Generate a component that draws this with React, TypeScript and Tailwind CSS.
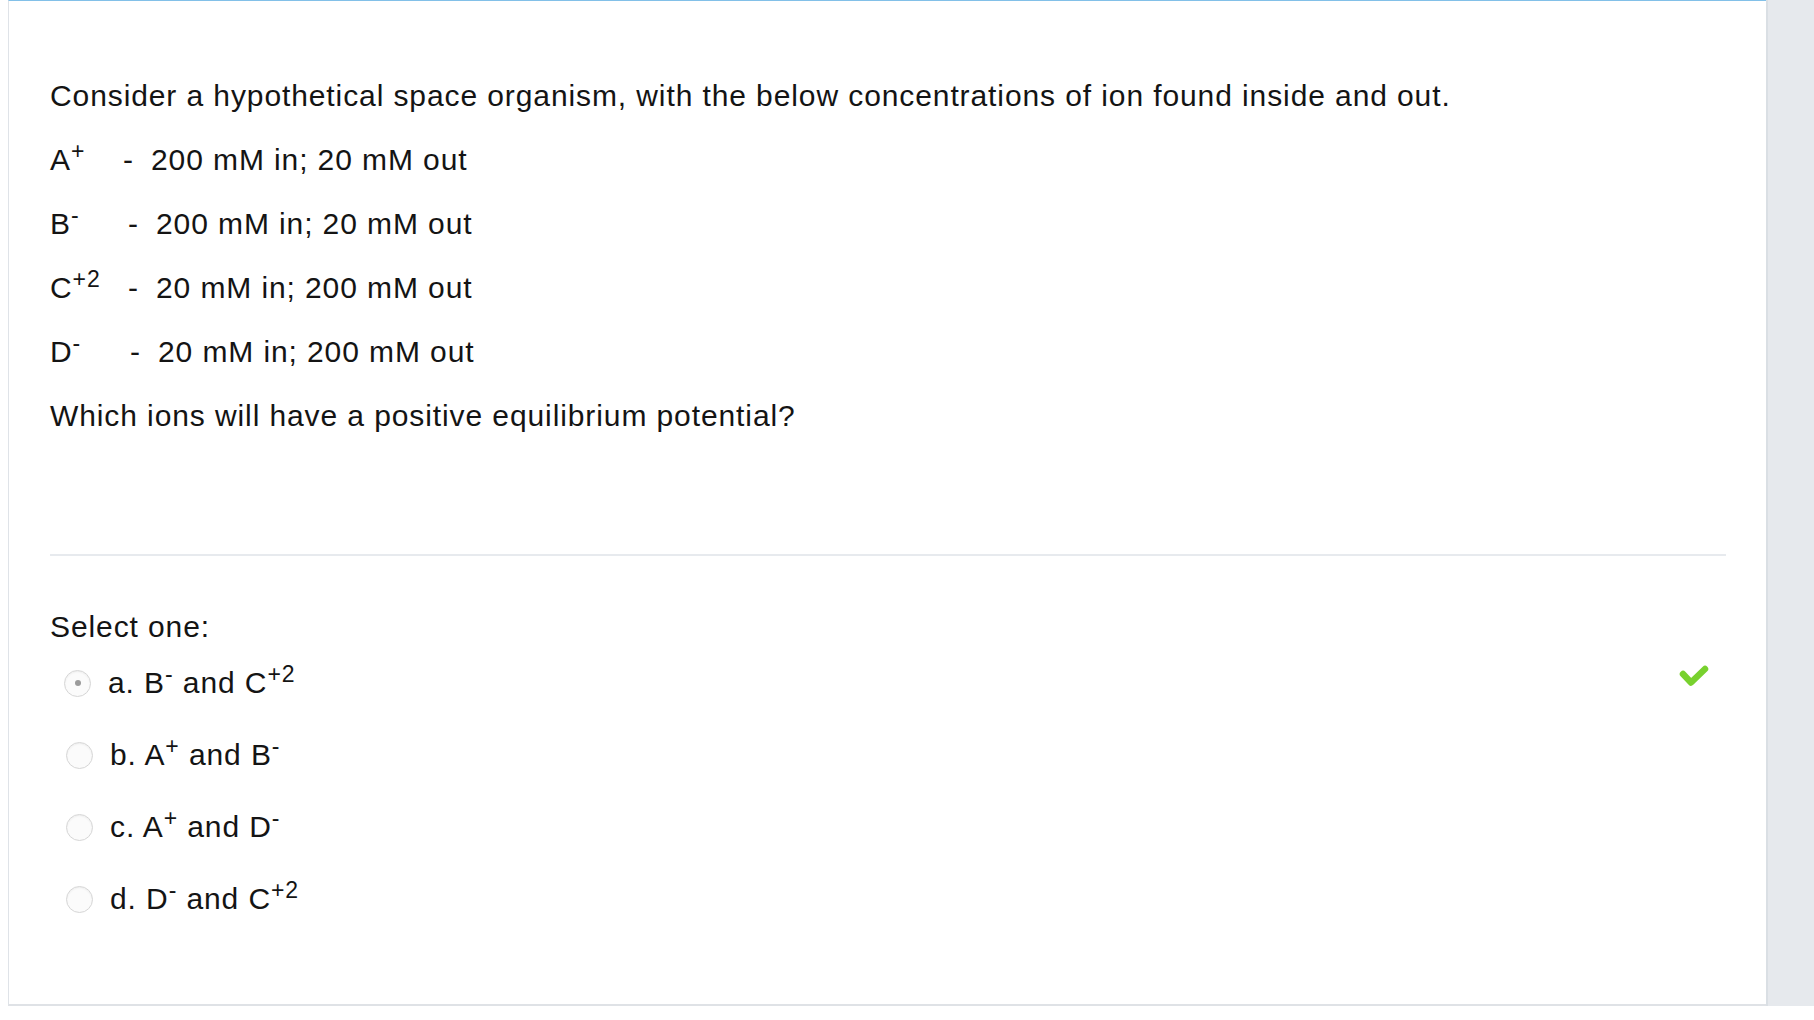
import React from "react";

const ions = [
  { label: "A", sup: "+", labelW: "w-[73px]", rest: "200 mM in; 20 mM out" },
  { label: "B", sup: "-", labelW: "w-[78px]", rest: "200 mM in; 20 mM out" },
  { label: "C", sup: "+2", labelW: "w-[78px]", rest: "20 mM in; 200 mM out" },
  { label: "D", sup: "-", labelW: "w-[80px]", rest: "20 mM in; 200 mM out" },
];

const options = [
  { key: "a", parts: [["B", "-"], ["C", "+2"]], checked: true },
  { key: "b", parts: [["A", "+"], ["B", "-"]], checked: false },
  { key: "c", parts: [["A", "+"], ["D", "-"]], checked: false },
  { key: "d", parts: [["D", "-"], ["C", "+2"]], checked: false },
];

function Radio({ checked }: { checked: boolean }) {
  return (
    <span className="flex h-[27px] w-[27px] shrink-0 items-center justify-center rounded-full border border-[#d6d6d6] bg-[#fbfbfb] shadow-[inset_0_1px_2px_rgba(0,0,0,0.06)]">
      {checked && <span className="h-[6px] w-[6px] rounded-full bg-[#9b9b9b]" />}
    </span>
  );
}

function Check() {
  return (
    <svg width="32" height="26" viewBox="0 0 32 26" className="mb-[14px] ml-auto mr-[16px]">
      <polyline
        points="5,11 13,19.5 27,6"
        fill="none"
        stroke="#78d12e"
        strokeWidth="6.5"
        strokeLinecap="round"
        strokeLinejoin="round"
      />
    </svg>
  );
}

export default function App() {
  return (
    <div className="flex h-[1020px] w-full items-start bg-white font-['Liberation_Sans',Arial,sans-serif] text-[30px] tracking-[0.9px] text-[#141414]">
      <div className="w-[8px] shrink-0" />
      <div className="h-[1006px] flex-1 border-b-2 border-l border-t border-b-[#dfe2e6] border-l-[#dfe3e8] border-t-[#82c0e8] pl-[41px] pr-[40px] pt-[63px]">
        <p className="leading-[64px]">
          Consider a hypothetical space organism, with the below concentrations of ion found inside and out.
        </p>
        {ions.map((ion) => (
          <p key={ion.label} className="leading-[64px] whitespace-nowrap">
            <span className={`inline-block ${ion.labelW}`}>
              {ion.label}
              <sup className="text-[23px]">{ion.sup}</sup>
            </span>
            <span className="inline-block w-[28px]">-</span>
            {ion.rest}
          </p>
        ))}
        <p className="leading-[64px]">Which ions will have a positive equilibrium potential?</p>

        <div className="mt-[106px] h-[2px] bg-[#e7eaee]" />

        <p className="mt-[51px] leading-[40px]">Select one:</p>
        <div className="flex flex-col">
          {options.map((opt) => (
            <div key={opt.key} className="flex h-[72px] items-center">
              <span className={opt.checked ? "ml-[14px]" : "ml-[16px]"}>
                <Radio checked={opt.checked} />
              </span>
              <span className="ml-[17px] whitespace-nowrap leading-[72px]">
                {opt.key}. {opt.parts[0][0]}
                <sup className="text-[23px]">{opt.parts[0][1]}</sup> and {opt.parts[1][0]}
                <sup className="text-[23px]">{opt.parts[1][1]}</sup>
              </span>
              {opt.checked && <Check />}
            </div>
          ))}
        </div>
      </div>
      <div className="h-[1006px] w-[48px] shrink-0 border-l-2 border-l-[#dadfe4] bg-[#e6e9ed]" />
    </div>
  );
}
